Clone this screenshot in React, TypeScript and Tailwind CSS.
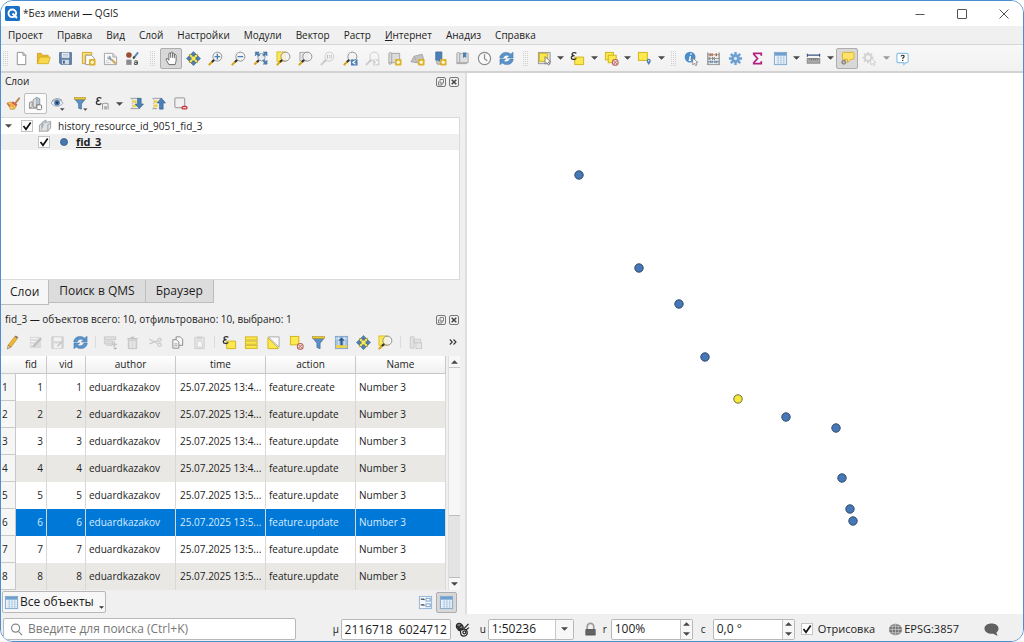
import React, { useState } from "react";

const YELLOW = "#fce94f";
const BLUE = "#4b7fb5";

// Magnifier shared by all zoom tools
const Lens = ({ faded = false, children }: { faded?: boolean; children?: React.ReactNode }) => (
  <g opacity={faded ? 0.4 : 1}>
    <path d="M5.2 10.8 1.5 14.5" stroke={faded ? "#999" : "#d9a514"} strokeWidth="2.2" strokeLinecap="round" />
    <path d="M7 9 4.2 11.8" stroke={faded ? "#888" : "#333"} strokeWidth="2.2" />
    <circle cx="10" cy="6" r="4.8" fill="#f3f3f1" fillOpacity="0.85" stroke="#8d8d8d" strokeWidth="1" />
    {children}
  </g>
);

const Epsilon = () => (
  <path
    d="M6.8 2.6C5.6 1.2 2.2 1.4 2.2 3.3c0 1.2 1.2 1.7 2.6 1.7C3 5 1.4 5.7 1.4 7.2c0 2.2 3.8 2.4 5.4.7"
    fill="none"
    stroke="#333"
    strokeWidth="1.4"
  />
);

const NoSign = () => (
  <g>
    <circle cx="12" cy="12.2" r="3.1" fill="#f6dfdc" stroke="#b5655c" strokeWidth="1.1" />
    <path d="m10 10.2 4 4M10 14.2l4-4" stroke="#b5655c" strokeWidth="1" />
  </g>
);

const Badge = () => (
  <g>
    <rect x="8.5" y="8.5" width="7" height="7" rx="1.2" fill="#dcb22c" />
    <circle cx="12" cy="12" r="1.8" fill="#fff6cc" />
  </g>
);

const MoveArrows = () => (
  <g>
    <rect x="3.5" y="3.5" width="9" height="9" fill={YELLOW} stroke="#d2b21c" strokeWidth="0.7" />
    <path d="m8 .4 3.2 3.400H9.200v1.700H6.800V3.800H4.800zM8 15.600l3.200-3.400H9.200v-1.700H6.800v1.700H4.800zM.4 8l3.400-3.200v2h1.700v2.400H3.800v2zM15.600 8l-3.400-3.200v2h-1.700v2.400h1.700v2z" fill={BLUE} stroke="#345f8e" strokeWidth="0.5" />
  </g>
);

const TableGrid = () => (
  <g>
    <rect x="1.5" y="1.5" width="13" height="13" fill="#eef5fb" stroke="#7ea6cc" />
    <rect x="2" y="2" width="12" height="3" fill="#6f9fcf" />
    <path d="M5.5 5v9M8.5 5v9M11.5 5v9" stroke="#a4c1dd" />
    <path d="M3 7.5h11M3 10h11M3 12.5h11" stroke="#bcd2e6" strokeWidth="0.7" />
  </g>
);

const icons = {
  file: <path d="M3.5 1.5h6l3 3v10h-9zM9.5 1.5v3h3" fill="#fff" stroke="#8d8d8d" />,
  folder: (
    <g>
      <path d="M1.5 13.5v-11h4l1.5 2h6v3" fill="#e9b92f" stroke="#c99a1c" strokeWidth="0.8" />
      <path d="m1.5 13.5 2.3-7h11.4l-2 7z" fill="#f9d84c" stroke="#d0a520" strokeWidth="0.8" />
    </g>
  ),
  save: (
    <g>
      <path d="M1.7 1.7h12.6v12.6H3.2l-1.5-1.5z" fill="#6584a8" stroke="#587699" />
      <rect x="4" y="1.8" width="8" height="5.4" fill="#f3f6fa" />
      <path d="M5 3.5h6M5 5.3h6" stroke="#98a9bb" strokeWidth="0.8" />
      <rect x="4.3" y="9.4" width="7.4" height="4.8" fill="#cfdbe8" />
      <rect x="5.3" y="10.3" width="2" height="3.2" fill="#48678a" />
    </g>
  ),
  newLayout: (
    <g>
      <path d="M1.5 1.5h10v3h-7v9h-3z" fill="#fce074" stroke="#cda52d" />
      <path d="M5 4.5h6l3 3v7H5z" fill="#fff" stroke="#999" />
      <Badge />
    </g>
  ),
  layouts: (
    <g>
      <path d="M1.500 2.500h9l4 4v8h-13z" fill="#fafafa" stroke="#a2a2a2" />
      <path d="M10.500 2.500v4h4" fill="#ddd" stroke="#aaa" />
      <path d="M5.300 5.300c1.500-1 3.700.4 3.200 2.200l1.500 1.500-1.500 1.500L7 9c-1.800.5-3-1.500-2.500-2.800l1.500 1 .8-.9z" fill="#8aa2bb" />
      <path d="m9 9 4.500 4.500" stroke="#d3a95d" strokeWidth="2.400" />
      <path d="M3 10.500h3M3 12.500h5" stroke="#ccc" />
    </g>
  ),
  styles: (
    <g>
      <circle cx="4.2" cy="4.2" r="3" fill="#9b5030" />
      <path d="m9.5 7 4.5-5.5" stroke="#5a88bd" strokeWidth="2" />
      <path d="m8.6 8 1.8-2" stroke="#444" strokeWidth="2" />
      <rect x="1.4" y="9.2" width="5.6" height="5.6" fill="#8a8a8a" />
      <path d="M10 11c1-1 3.3-.8 3.3.8v2.6m0-2.1c-1.5-.2-3.4 0-3.3 1.2 0 1.3 2.4 1.2 3.3-.3" fill="none" stroke="#555" strokeWidth="1.1" />
    </g>
  ),
  hand: (
    <path
      d="M5.2 14.5 2.5 9.7C1.6 8 3.3 7.3 4.2 8.6l1 1.3V3.2c0-1.5 1.9-1.5 1.9 0V2.3c0-1.5 2-1.5 2 0v1c0-1.4 1.9-1.3 1.9 0v1.2c.2-1.2 1.9-1 1.9.3v5.4c0 1.6-.8 2.4-1.1 4.3zM7.1 3v4.3M9.1 3v4.3M11 4v3.6"
      fill="#fff"
      stroke="#555"
      strokeWidth="0.9"
    />
  ),
  move: <MoveArrows />,
  zoomIn: (
    <Lens>
      <path d="M10 3v6M7 6h6" stroke="#4b7fb5" strokeWidth="1.5" />
    </Lens>
  ),
  zoomOut: (
    <Lens>
      <path d="M7 6h6" stroke="#4b7fb5" strokeWidth="1.5" />
    </Lens>
  ),
  zoomFull: (
    <g>
      <path d="M5 11 1.500 14.500" stroke="#d9a514" strokeWidth="2.200" />
      <path d="M6.500 9.500 4.200 11.800" stroke="#333" strokeWidth="2.200" />
      <circle cx="9" cy="6.500" r="4" fill="#e7edf3" stroke="#8d99a5" />
      <path d="M2.500 1h4.200L5.500 2.200l2 2L6 5.700l-2-2-1.500 1.500zM15 1v4.200l-1.200-1.500-2 2-1.500-1.500 2-2L10.800 1zM15 14h-4.200l1.500-1.300-2-2 1.500-1.500 2 2L15 9.800z" fill={BLUE} stroke="#3a6595" strokeWidth="0.500" />
    </g>
  ),
  zoomSelection: (
    <g>
      <rect x="1" y="1" width="9" height="10" fill={YELLOW} stroke="#d2b21c" strokeWidth="0.8" />
      <Lens />
    </g>
  ),
  zoomLayer: (
    <g>
      <rect x="2" y="1.5" width="8" height="9" fill="#e4e4e4" stroke="#aaa" />
      <Lens />
    </g>
  ),
  zoomNative: (
    <Lens faded>
      <path d="M8 4v4M12 4v4M10 4.6v.9M10 6.700v.9" stroke="#666" strokeWidth="1.1" />
    </Lens>
  ),
  zoomLast: (
    <g>
      <Lens />
      <rect x="8.500" y="9" width="7" height="6.500" fill={BLUE} />
      <path d="m13.300 10.200-2.800 2 2.800 2" fill="none" stroke="#fff" strokeWidth="1.200" />
    </g>
  ),
  zoomNext: (
    <g>
      <Lens faded />
      <rect x="8.500" y="9" width="7" height="6.500" fill="#d5d5d5" />
      <path d="m10.800 10.200 2.800 2-2.800 2" fill="none" stroke="#fff" strokeWidth="1.200" />
    </g>
  ),
  newMap: (
    <g>
      <path d="M2 2.500C3 1 5 1.500 5 3v9.500H2zM5 2.500h8.500v10H5M2 12.500v1c1 1.500 3 .5 3-1" fill="#dcdcdc" stroke="#9c9c9c" strokeWidth="0.9" />
      <Badge />
    </g>
  ),
  new3d: (
    <g>
      <path d="M1 11.500 4.500 5.500 13 3.500l2 7-5 2.500z" fill="#c3c3c3" stroke="#999" strokeWidth="0.8" />
      <path d="M4.500 5.500 7 12" stroke="#aaa" strokeWidth="0.8" />
      <Badge />
    </g>
  ),
  newBookmark: (
    <g>
      <path d="M4 1h6.500v12.500L7 11.500 4 9.500z" fill={BLUE} stroke="#3d699a" strokeWidth="0.8" />
      <path d="M4 9.500 5.500 14H10v-2" fill="#ccc" stroke="#888" strokeWidth="0.7" />
      <Badge />
    </g>
  ),
  bookmarks: (
    <g>
      <path d="M2 2.500C3 1 5 1.500 5 3v9.500H2zM5 2.500h9v10H5M2 12.500v1h10v-1" fill="#dfdfdf" stroke="#9c9c9c" strokeWidth="0.9" />
      <path d="M8.500 1.500h3.500v6l-1.700-1.300-1.800 1.300z" fill={BLUE} />
    </g>
  ),
  clock: (
    <g fill="none" stroke="#8b8b8b" strokeWidth="1.3">
      <circle cx="8" cy="8" r="6.500" fill="#fafafa" />
      <path d="M8 3.500V8.300l3 2" />
    </g>
  ),
  refresh: (
    <g fill="#5a93cc" stroke="#3f74aa" strokeWidth="0.5">
      <path d="M.8 7.400C1 1.800 8 -.3 12.500 3.200L15 1.300v6.200H8.800l2.300-2.100C8.500 3.400 5.200 4.600 4.400 7.400z" />
      <path d="M15.200 8.600c-.2 5.600-7.200 7.700-11.700 4.200L1 14.700V8.500h6.200l-2.300 2.100c2.600 2 5.900.8 6.700-2z" />
    </g>
  ),
  select: (
    <g>
      <rect x="1.500" y="1.500" width="12.500" height="12" fill="#e0e0dc" stroke="#999" />
      <rect x="2.500" y="2.500" width="8.500" height="8.500" fill={YELLOW} stroke="#d2b21c" />
      <path d="m8.500 6 .2 8 2-1.600 1.300 2.600 1.500-.8-1.300-2.400 2.500-.4z" fill="#fff" stroke="#666" strokeWidth="0.8" />
    </g>
  ),
  selectExpr: (
    <g>
      <path d="M5 6.500h9.500v8H5z" fill={YELLOW} stroke="#d2b21c" />
      <Epsilon />
    </g>
  ),
  deselect: (
    <g>
      <rect x="1.500" y="1.500" width="8.500" height="8" fill={YELLOW} stroke="#d2b21c" />
      <rect x="4.500" y="4.500" width="8.500" height="8" fill={YELLOW} stroke="#d2b21c" />
      <NoSign />
    </g>
  ),
  deselectOne: (
    <g>
      <rect x="1.500" y="1.500" width="9" height="9" fill={YELLOW} stroke="#d2b21c" />
      <NoSign />
    </g>
  ),
  selectLocation: (
    <g>
      <rect x="1.500" y="1.500" width="9.500" height="8.500" fill={YELLOW} stroke="#d2b21c" />
      <path d="M12.500 15C11 12.500 10.300 11.700 10.300 10.500a2.200 2.200 0 0 1 4.400 0c0 1.200-.7 2-2.200 4.500z" fill={BLUE} />
      <circle cx="12.500" cy="10.400" r=".8" fill="#fff" />
    </g>
  ),
  identify: (
    <g>
      <circle cx="6.500" cy="6.500" r="5.800" fill="#4e8cc8" />
      <path d="M7.500 2.600 7.200 4M6.800 5.400 5.800 10h1.800" stroke="#fff" strokeWidth="1.500" fill="none" />
      <path d="m9.200 7.500.2 7.200 1.800-1.500 1.200 2.500 1.400-.8-1.200-2.300 2.300-.4z" fill="#fff" stroke="#777" strokeWidth="0.8" />
    </g>
  ),
  calculator: (
    <g>
      <path d="M2 1.500v13M14 1.500v13" stroke="#888" strokeWidth="1.300" />
      <path d="M2 4h12M2 8h12M2 11.500h12M1 14.500h14" stroke="#888" strokeWidth="0.9" />
      <path d="M4.500 2.500v3M6.500 2.500v3M11 2.500v3" stroke="#b3653b" strokeWidth="1.400" />
      <path d="M4 6.500v3M7 6.500v3M9 6.500v3" stroke="#888" strokeWidth="1.200" />
      <path d="M4.500 10v3M6.500 10v3M9.500 10v3M11.500 10v3" stroke="#5686b6" strokeWidth="1.200" />
    </g>
  ),
  gear: (
    <g>
      <path d="M8 1v14M1 8h14M3 3l10 10M13 3 3 13" stroke="#6da0d3" strokeWidth="2.600" />
      <circle cx="8" cy="8" r="4.600" fill="#6da0d3" />
      <circle cx="8" cy="8" r="2.200" fill="#d9e8f6" stroke="#5586b8" strokeWidth="0.6" />
    </g>
  ),
  sigma: <path d="M12 5V2.500H4V3.500L8 8l-4 4.500v1h8V11" fill="none" stroke="#b0247f" strokeWidth="1.900" />,
  table: <TableGrid />,
  measure: (
    <g>
      <path d="M1.500 4.500h13M1.500 3v3M14.500 3v3" stroke="#3c5480" strokeWidth="1.300" />
      <rect x="1.300" y="8" width="13.400" height="5" fill="#aaa" stroke="#888" />
      <path d="M4 8v2M6 8v2M8 8v2M10 8v2M12 8v2" stroke="#666" strokeWidth="0.8" />
    </g>
  ),
  mapTips: (
    <g>
      <path d="M4 1.500h9.500q1.500 0 1.500 1.500V7.500q0 1.500-1.500 1.500H11L8 12.500V9H4Q2.500 9 2.500 7.500V3Q2.500 1.500 4 1.500z" fill="#fde36b" stroke="#e0ae1d" />
      <circle cx="4" cy="12" r="2.600" fill="#8b8b80" />
      <circle cx="4" cy="12" r="1" fill="#c8c8c0" />
    </g>
  ),
  action: (
    <g opacity="0.45">
      <path d="M6.500 1v12M.5 7h12M2.300 2.800l8.500 8.500M10.700 2.800l-8.500 8.500" stroke="#aaa" strokeWidth="2" />
      <circle cx="6.500" cy="7" r="4.600" fill="#aaa" />
      <circle cx="6.500" cy="7" r="2.600" fill="#f4f4f4" />
      <path d="m9.200 7.500.2 7.200 1.800-1.500 1.200 2.500 1.400-.8-1.200-2.300 2.300-.4z" fill="#fff" stroke="#888" strokeWidth="0.8" />
    </g>
  ),
  help: (
    <g>
      <path d="M3.500 2.500h9q1.500 0 1.500 1.500v7q0 1.500-1.500 1.500H11l-1.500 2-.5-2H3.500Q2 12.500 2 11V4q0-1.500 1.500-1.500z" fill="#fff" stroke="#8cc4e8" strokeWidth="1.300" />
      <path d="M6.500 5.700c.2-1.600 3.300-1.500 3.200.1 0 1-1.500 1.200-1.500 2.400M8.200 9.300v1.300" fill="none" stroke="#333" strokeWidth="1.300" />
    </g>
  ),
  brush: (
    <g>
      <path d="m10 7.500 4-5" stroke="#b98a5a" strokeWidth="2.200" strokeLinecap="round" />
      <path d="M1 7.500 5 6.500l6 4L9 14l-4 .3z" fill="#f4c95f" stroke="#b98a38" strokeWidth="0.7" />
      <path d="m6.500 6.500 5 3.500" stroke="#d6604c" strokeWidth="2.200" />
      <path d="m1.500 8 3 3" stroke="#c8604c" strokeWidth="1.300" />
      <path d="m4.500 8.500 4.300 3.500" stroke="#e89a3c" strokeWidth="1.200" />
    </g>
  ),
  addGroup: (
    <g>
      <path d="M1.500 13V7l3-1v5l-2 2zM5.500 12V4l3.500-2.500V12z" fill="#e0e0e0" stroke="#888" strokeWidth="0.9" />
      <path d="M9 1.500 12.500 3v6H9" fill="#b8c6d4" stroke="#7d8ea0" strokeWidth="0.9" />
      <path d="M1.500 13h8" stroke="#888" />
      <rect x="9.500" y="9.500" width="5" height="5" rx="1" fill="#fff" stroke="#777" />
    </g>
  ),
  eye: (
    <g>
      <path d="M1 7.500C4 3 11 2.500 14 7.500 11 12 4 12 1 7.500z" fill="#e8edf2" stroke="#98a4b0" strokeWidth="0.9" />
      <path d="M2 5.500C5 2 10 2 13 5" fill="none" stroke="#8a98a6" />
      <circle cx="7.500" cy="7.200" r="3" fill="#416f9f" />
      <circle cx="7.500" cy="7.200" r="1.200" fill="#1e3550" />
      <path d="M10.500 13h5L13 15.600z" fill="#444" />
    </g>
  ),
  filterMenu: (
    <g>
      <path d="M2 3.500h11L9 8.500v5.500l-3-1V8.500z" fill="#5b8fc5" stroke="#3d6b9c" strokeWidth="0.7" />
      <rect x="1.500" y="1.500" width="12" height="2.300" fill="#e8c93a" stroke="#a89029" strokeWidth="0.6" />
      <path d="M10.800 13.200h4.700l-2.300 2.400z" fill="#444" />
    </g>
  ),
  filter: (
    <g>
      <path d="M2 3.500h12L9.700 8.700v6l-3.400-1.500V8.700z" fill="#5b8fc5" stroke="#3d6b9c" strokeWidth="0.7" />
      <rect x="1.500" y="1.500" width="13" height="2.300" fill="#e8c93a" stroke="#a89029" strokeWidth="0.6" />
    </g>
  ),
  epsilonFilter: (
    <g>
      <Epsilon />
      <path d="M8 14.500V9.200q0-1.500 1.500-1.500h3q1.500 0 1.500 1.500v5.300M10.500 14.500v-3h1.500v3" fill="none" stroke="#999" strokeWidth="1.100" />
    </g>
  ),
  expand: (
    <g>
      <path d="M1.500 2.500h9M1.500 13.500h9" stroke="#999" />
      <path d="M3.500 3.500v10" stroke="#aaa" strokeDasharray="1 1" />
      <rect x="4" y="4.500" width="4" height="3" fill="#f0d34a" />
      <rect x="4" y="9" width="4" height="3" fill="#f0d34a" />
      <path d="M9 2.500h4v6h2.500L11 13.500l-4.500-5H9z" fill={BLUE} stroke="#315f90" strokeWidth="0.6" />
    </g>
  ),
  collapse: (
    <g>
      <path d="M1.500 2.500h9M1.500 13.500h5" stroke="#999" />
      <path d="M3 3.500v10" stroke="#aaa" strokeDasharray="1 1" />
      <rect x="3" y="4.500" width="4" height="3" fill="#f0d34a" />
      <rect x="3" y="9" width="4" height="3" fill="#f0d34a" />
      <path d="M9 14h4V7.500h2.500L11 2 6.500 7.500H9z" fill={BLUE} stroke="#315f90" strokeWidth="0.6" />
    </g>
  ),
  removeLayer: (
    <g>
      <rect x="2" y="2" width="10.500" height="10.500" rx="1" fill="#f1f1f1" stroke="#8f8f8f" />
      <rect x="9" y="10.500" width="6.500" height="4" rx="1.800" fill="#c8393f" />
      <path d="M10.500 12.500h3.500" stroke="#fff" />
    </g>
  ),
  group: (
    <g>
      <path d="M1.500 13.500V6.500l3-2V12z" fill="#ddd" stroke="#999" strokeWidth="0.9" />
      <path d="M4.500 12.500v-9l4-2.500v10z" fill="#c3d0dc" stroke="#8b9bab" strokeWidth="0.9" />
      <path d="m8.500 3.500 5-1v7l-3 3.500H3" fill="#e2e2e2" stroke="#999" strokeWidth="0.9" />
      <path d="M10.500 13V6l3-1.500" fill="none" stroke="#999" strokeWidth="0.9" />
    </g>
  ),
  pencil: (
    <g>
      <path d="m3.300 10.800 7-9 2.800 2-6.700 9.200z" fill="#f0b832" stroke="#b8862a" strokeWidth="0.7" />
      <path d="m10.300 1.800 1.200-1.300 2.700 2-1.100 1.300z" fill="#7d7468" />
      <path d="m3.300 10.800-.8 4.200 3.900-2z" fill="#e6cda3" stroke="#8a6a3a" strokeWidth="0.6" />
    </g>
  ),
  editMulti: (
    <g opacity="0.7">
      <rect x="2" y="2" width="12" height="12" fill="#d3d3d3" />
      <path d="M3 4h7M3 7h5M3 10h3" stroke="#fff" />
      <path d="m5.500 12.500 8.500-9" stroke="#a5a5a5" strokeWidth="2" />
    </g>
  ),
  saveEdits: (
    <g opacity="0.75">
      <path d="M2 2h12v12H2z" fill="#d2d2d2" stroke="#bbb" />
      <rect x="4" y="2.500" width="8" height="4" fill="#f4f4f4" />
      <rect x="4" y="9" width="8" height="5" fill="#f0f0f0" />
      <path d="m8 12 5-5" stroke="#b5b5b5" strokeWidth="1.500" />
    </g>
  ),
  addFeature: (
    <g opacity="0.7">
      <path d="M1.500 2h12v3h-12zM1.500 6.500h9v3h-9zM3.500 11h6" fill="#ddd" stroke="#b5b5b5" />
      <path d="M12 7v6M9 10h6" stroke="#b5b5b5" strokeWidth="1.600" />
      <path d="M11 13.500h4l-2 2z" fill="#888" />
    </g>
  ),
  trash: (
    <g opacity="0.75">
      <path d="M3.500 5.500h9v9h-9z" fill="#d2d2d2" stroke="#b5b5b5" />
      <path d="M2.500 4h11M6 2.500h4" stroke="#b5b5b5" strokeWidth="1.500" />
      <path d="M6.300 6v8M9.700 6v8" stroke="#f1f1f1" />
    </g>
  ),
  cut: (
    <g fill="none" stroke="#c9c9c9" strokeWidth="1.300">
      <path d="m1.500 4.500 9 4.500M1.500 9.500l9-3.500" />
      <circle cx="12.300" cy="5" r="1.700" />
      <circle cx="12.300" cy="10.300" r="1.700" />
    </g>
  ),
  copy: (
    <g fill="#f7f7f7" stroke="#888">
      <path d="M6.500 2h4.500l2.500 2.500V11h-7z" />
      <path d="M3 5h4l2.500 2.500V14H3z" />
      <path d="M4.500 9.500H8M4.500 11.500H8" strokeWidth="0.8" />
    </g>
  ),
  paste: (
    <g opacity="0.8">
      <rect x="3" y="2.500" width="10" height="12" fill="#e2e2e2" stroke="#c8c8c8" />
      <rect x="5.500" y="1.500" width="5" height="2.500" fill="#cacaca" />
      <path d="M5.500 6.500H9l2 2V13H5.500z" fill="#f9f9f9" stroke="#ccc" />
    </g>
  ),
  selectAll: (
    <g fill={YELLOW} stroke="#d2b21c">
      <rect x="1.500" y="2" width="12.500" height="3.300" />
      <rect x="1.500" y="6.500" width="12.500" height="3.300" />
      <rect x="1.500" y="11" width="12.500" height="3.300" />
    </g>
  ),
  invert: (
    <g>
      <path d="M2.500 2H14v11z" fill="#fafafa" stroke="#aaa" />
      <path d="M2 3v11.500h11.500z" fill={YELLOW} stroke="#d2b21c" />
    </g>
  ),
  moveTop: (
    <g>
      <rect x="1.500" y="1.500" width="13" height="13" fill="#a6c3df" stroke="#7fa5cb" />
      <path d="M1.500 4h13M5 2v10M11 2v10" stroke="#d7e4f0" />
      <rect x="2" y="10.800" width="12" height="3" fill="#f0d34a" />
      <path d="M8 2.500 11.500 6H9.200v5H6.800V6H4.500z" fill="#315f90" />
    </g>
  ),
  dock: (
    <g opacity="0.7">
      <path d="M2.500 2h4v12h-4zM6.500 4.500h7v4h-7z" fill="#ddd" stroke="#bbb" />
      <rect x="8.500" y="8.500" width="6" height="6" fill="#e3e3e3" stroke="#bbb" />
    </g>
  ),
  form: (
    <g>
      <rect x="1.500" y="1.500" width="13" height="13" fill="#f4f8fc" stroke="#8fb3d6" />
      <rect x="8.500" y="3.500" width="4.500" height="3" fill="#fff" stroke="#6d9ccb" />
      <rect x="8.500" y="9.500" width="4.500" height="3" fill="#fff" stroke="#6d9ccb" />
      <path d="M3 4.500h2.500L7 5M3 10.500h2.500L7 11" stroke="#444" strokeWidth="1.300" fill="none" />
    </g>
  ),
  mouse: (
    <g fill="none" stroke="#222" strokeWidth="1.300">
      <ellipse cx="5" cy="5" rx="3.800" ry="3.200" fill="#777" transform="rotate(45 5 5)" />
      <path d="M7 3 3 7M1.500 4 8 8.500M3 8.500c2 0 3 1 3 3s1 3.500 3.500 3.500 4-2 3.500-4.500-3-3.500-5-2.500" />
      <circle cx="10" cy="11" r="1.600" />
      <path d="M9.500 7 14.500 2M11.500 8.500 15 6" />
    </g>
  ),
  lock: (
    <g>
      <path d="M4.500 8V5a3.500 3.500 0 0 1 7 0v3" fill="none" stroke="#9b9b9b" strokeWidth="1.800" />
      <rect x="2.500" y="7.500" width="11" height="7" rx="1" fill="#5c5c5c" />
      <path d="M3 9.500h10M3 11.500h10" stroke="#777" strokeWidth="0.6" />
    </g>
  ),
  globe: (
    <g>
      <ellipse cx="8" cy="8" rx="7" ry="6.200" fill="#777" />
      <g fill="none" stroke="#cfcfcf" strokeWidth="0.7">
        <path d="M1 8h14M2.500 4.600h11M2.500 11.400h11M8 1.800v12.400" />
        <ellipse cx="8" cy="8" rx="3.500" ry="6.200" />
      </g>
    </g>
  ),
  chat: <path d="M8 1.500c4.600 0 7.500 2.300 7.500 5.500 0 2-1 3.500-2.300 4.300L14.500 15l-4.700-2.400C4.200 13 .5 10.600.5 7 .5 3.800 3.400 1.500 8 1.500z" fill="#606060" />,
  search: (
    <g fill="none" stroke="#8a8a8a" strokeWidth="1.300">
      <circle cx="7" cy="6.500" r="4.300" />
      <path d="m10 10 4 4" />
    </g>
  ),
};

type IconName = keyof typeof icons;

const Icon = ({ name }: { name: IconName }) => (
  <svg viewBox="0 0 16 16" fill="none" className="size-[15px] shrink-0" aria-hidden="true">
    {icons[name]}
  </svg>
);

const Triangle = ({ up = false, faded = false }: { up?: boolean; faded?: boolean }) => (
  <svg viewBox="0 0 8 4" className="h-1 w-[7px] shrink-0" aria-hidden="true">
    <path d={up ? "M0 4h8L4 0z" : "M0 0h8L4 4z"} fill={faded ? "#999" : "#484848"} />
  </svg>
);

interface Tool {
  icon: IconName;
  label: string;
  menu?: boolean;
  active?: "gray" | "white";
  disabled?: boolean;
}

const ToolGroup = ({ tools, className }: { tools: Tool[]; className: string }) => (
  <div className={`flex shrink-0 ${className}`}>
    {tools.map((tool) => (
      <div key={tool.label} className={`flex min-w-0 items-center ${tool.menu ? "flex-[3]" : "flex-[2]"}`}>
        <button
          type="button"
          aria-label={tool.label}
          disabled={tool.disabled}
          className={`flex h-[21px] min-w-0 flex-[2] items-center justify-center rounded-xs ${
            tool.active === "gray"
              ? "border border-[#adadad] bg-[#d8d8d8]"
              : tool.active === "white"
              ? "border border-[#bdbdbd] bg-[#fbfbfb]"
              : ""
          }`}
        >
          <Icon name={tool.icon} />
        </button>
        {tool.menu && (
          <button type="button" aria-label={`${tool.label}: меню`} className="flex min-w-0 flex-1 items-center justify-center">
            <Triangle faded={tool.disabled} />
          </button>
        )}
      </div>
    ))}
  </div>
);

const Grip = ({ className }: { className: string }) => (
  <div className={`flex shrink-0 justify-center ${className}`}>
    <svg viewBox="0 0 5 15" className="h-[15px] w-[5px]" aria-hidden="true">
      <path d="M.5 0v15M2.500 0v15M4.500 0v15" stroke="#cfcfcf" strokeDasharray="1 1" />
    </svg>
  </div>
);

const Separator = () => <div className="mx-[3px] h-3 w-px shrink-0 bg-[#dcdcdc]" />;

const fileTools: Tool[] = [
  { icon: "file", label: "Новый проект" },
  { icon: "folder", label: "Открыть проект" },
  { icon: "save", label: "Сохранить проект" },
  { icon: "newLayout", label: "Новый макет" },
  { icon: "layouts", label: "Менеджер макетов" },
  { icon: "styles", label: "Управление стилями" },
];

const navigationTools: Tool[] = [
  { icon: "hand", label: "Прокрутка карты", active: "gray" },
  { icon: "move", label: "Центрировать выделенное" },
  { icon: "zoomIn", label: "Увеличить" },
  { icon: "zoomOut", label: "Уменьшить" },
  { icon: "zoomFull", label: "Полный охват" },
  { icon: "zoomSelection", label: "Увеличить до выделенного" },
  { icon: "zoomLayer", label: "Увеличить до слоя" },
  { icon: "zoomNative", label: "Исходное разрешение", disabled: true },
  { icon: "zoomLast", label: "Предыдущий охват" },
  { icon: "zoomNext", label: "Следующий охват", disabled: true },
  { icon: "newMap", label: "Новая карта" },
  { icon: "new3d", label: "Новая 3D карта" },
  { icon: "newBookmark", label: "Новая закладка" },
  { icon: "bookmarks", label: "Закладки" },
  { icon: "clock", label: "Управление временем" },
  { icon: "refresh", label: "Обновить" },
];

const selectionTools: Tool[] = [
  { icon: "select", label: "Выделить объекты", menu: true },
  { icon: "selectExpr", label: "Выделить по выражению", menu: true },
  { icon: "deselect", label: "Снять выделение", menu: true },
  { icon: "selectLocation", label: "Выделить по положению", menu: true },
];

const attributeTools: Tool[] = [
  { icon: "identify", label: "Определить объекты" },
  { icon: "calculator", label: "Калькулятор полей" },
  { icon: "gear", label: "Анализ данных" },
  { icon: "sigma", label: "Статистика" },
  { icon: "table", label: "Таблица атрибутов", menu: true },
  { icon: "measure", label: "Измерить", menu: true },
  { icon: "mapTips", label: "Подсказки карты", active: "gray" },
  { icon: "action", label: "Действие", menu: true, disabled: true },
  { icon: "help", label: "Справка" },
];

const layerTools: Tool[] = [
  { icon: "brush", label: "Стилизация слоя" },
  { icon: "addGroup", label: "Добавить группу", active: "white" },
  { icon: "eye", label: "Видимость слоёв" },
  { icon: "filterMenu", label: "Фильтр легенды" },
  { icon: "epsilonFilter", label: "Фильтр по выражению", menu: true },
  { icon: "expand", label: "Развернуть все" },
  { icon: "collapse", label: "Свернуть все" },
  { icon: "removeLayer", label: "Удалить слой" },
];

const editTools: Tool[] = [
  { icon: "pencil", label: "Режим правки" },
  { icon: "editMulti", label: "Массовая правка", disabled: true },
  { icon: "saveEdits", label: "Сохранить правки", disabled: true },
  { icon: "refresh", label: "Обновить таблицу" },
];

const clipboardTools: Tool[] = [
  { icon: "addFeature", label: "Добавить объект", disabled: true },
  { icon: "trash", label: "Удалить объекты", disabled: true },
  { icon: "cut", label: "Вырезать", disabled: true },
  { icon: "copy", label: "Копировать" },
  { icon: "paste", label: "Вставить", disabled: true },
];

const tableSelectionTools: Tool[] = [
  { icon: "selectExpr", label: "Выделить выражением" },
  { icon: "selectAll", label: "Выделить все" },
  { icon: "invert", label: "Обратить выделение" },
  { icon: "deselectOne", label: "Снять выделение" },
  { icon: "filter", label: "Фильтр" },
  { icon: "moveTop", label: "Поднять выделенное" },
  { icon: "move", label: "Центрировать карту" },
  { icon: "zoomSelection", label: "Увеличить до строк" },
];

const dockTools: Tool[] = [{ icon: "dock", label: "Новое поле", disabled: true }];

const menuItems = ["Проект", "Правка", "Вид", "Слой", "Настройки", "Модули", "Вектор", "Растр", "Интернет", "Анадиз", "Справка"];

const features = [
  { fid: 1, time: "25.07.2025 13:4...", action: "feature.create" },
  { fid: 2, time: "25.07.2025 13:4...", action: "feature.update" },
  { fid: 3, time: "25.07.2025 13:4...", action: "feature.update" },
  { fid: 4, time: "25.07.2025 13:4...", action: "feature.update" },
  { fid: 5, time: "25.07.2025 13:5...", action: "feature.update" },
  { fid: 6, time: "25.07.2025 13:5...", action: "feature.update" },
  { fid: 7, time: "25.07.2025 13:5...", action: "feature.update" },
  { fid: 8, time: "25.07.2025 13:5...", action: "feature.update" },
];

// Point positions on the map canvas
const points = [
  { x: 112, y: 102 },
  { x: 172, y: 195 },
  { x: 212, y: 231 },
  { x: 238, y: 284 },
  { x: 271, y: 326, selected: true },
  { x: 319, y: 344 },
  { x: 369, y: 355 },
  { x: 375, y: 405 },
  { x: 383, y: 436 },
  { x: 386, y: 448 },
];

const Checkbox = ({ id, label }: { id: string; label?: string }) => {
  const [checked, setChecked] = useState(true);
  return (
    <span className="relative flex size-3 shrink-0">
      <input
        id={id}
        type="checkbox"
        aria-label={label}
        checked={checked}
        onChange={(e) => setChecked(e.target.checked)}
        className="size-3 appearance-none border border-[#c4c4c4] bg-white"
      />
      {checked && (
        <svg viewBox="0 0 12 12" className="pointer-events-none absolute inset-0" aria-hidden="true">
          <path d="m2.500 6 2.500 3.200L9.700 2.500" fill="none" stroke="#111" strokeWidth="1.700" />
        </svg>
      )}
    </span>
  );
};

const DockHeader = ({ title }: { title: string }) => (
  <div className="flex h-[17px] items-center justify-between pr-[6px] pl-1">
    <h2 className="truncate text-[10px]">{title}</h2>
    <div className="flex gap-[3px]">
      <button type="button" aria-label="Открепить панель">
        <svg viewBox="0 0 10 10" className="size-[10px]" fill="none" stroke="#777">
          <rect x=".5" y=".5" width="9" height="9" rx="1.500" />
          <path d="M4 2.500h3.500V6H4zM2.500 4.500v3.500H6V6" strokeWidth="0.9" />
        </svg>
      </button>
      <button type="button" aria-label="Закрыть панель">
        <svg viewBox="0 0 10 10" className="size-[10px]" fill="none" stroke="#777">
          <rect x=".5" y=".5" width="9" height="9" rx="1.500" />
          <path d="m2.700 2.700 4.600 4.600M7.300 2.700 2.700 7.300" stroke="#444" strokeWidth="1.500" />
        </svg>
      </button>
    </div>
  </div>
);

const TitleBar = () => (
  <header className="flex h-[25px] items-center bg-white pl-1">
    <svg viewBox="0 0 15 15" className="size-[15px]" aria-hidden="true">
      <rect width="15" height="15" rx="1.500" fill="#1b6fc4" />
      <circle cx="7.300" cy="7.300" r="3.800" fill="none" stroke="#fff" strokeWidth="1.900" />
      <path d="m7.500 7.500 4.500 4.500" stroke="#fff" strokeWidth="2" />
    </svg>
    <h1 className="ml-[3px] flex-1 text-[10px]">*Без имени — QGIS</h1>
    <div className="flex gap-8 pr-[14px]">
      <button type="button" aria-label="Свернуть">
        <svg viewBox="0 0 10 10" className="size-[10px]" fill="none" stroke="#555">
          <path d="M.5 5.500h9" />
        </svg>
      </button>
      <button type="button" aria-label="Развернуть">
        <svg viewBox="0 0 10 10" className="size-[10px]" fill="none" stroke="#555">
          <rect x=".5" y=".5" width="9" height="9" rx="0.5" />
        </svg>
      </button>
      <button type="button" aria-label="Закрыть">
        <svg viewBox="0 0 10 10" className="size-[10px]" fill="none" stroke="#555">
          <path d="m.5.5 9 9M9.500.5l-9 9" />
        </svg>
      </button>
    </div>
  </header>
);

const LayersPanel = () => {
  const [tab, setTab] = useState("Слои");
  return (
    <section className="flex flex-col">
      <DockHeader title="Слои" />
      <div className="flex h-[27px] items-center pl-px">
        <ToolGroup tools={layerTools} className="w-[190px]" />
      </div>
      <div className="mr-[5px] h-[163px] border border-l-0 border-[#dadada] bg-white">
        <div className="flex h-4 items-center pl-1">
          <button type="button" aria-label="Свернуть группу" className="flex w-4 shrink-0">
            <Triangle />
          </button>
          <Checkbox id="layer-group" label="history_resource_id_9051_fid_3" />
          <span className="mx-[5px] flex">
            <Icon name="group" />
          </span>
          <span className="text-[10px]">history_resource_id_9051_fid_3</span>
        </div>
        <div className="flex h-4 items-center bg-[#f0f0f0] pl-[37px]">
          <Checkbox id="layer-fid" label="fid_3" />
          <svg viewBox="0 0 8 8" className="mr-2 ml-[10px] size-2" aria-hidden="true">
            <circle cx="4" cy="4" r="3.500" fill="#4678b2" stroke="#34577f" strokeWidth="0.8" />
          </svg>
          <span className="text-[11px] font-bold underline">fid_3</span>
        </div>
      </div>
      <div role="tablist" className="flex h-[25px] items-start">
        {["Слои", "Поиск в QMS", "Браузер"].map((name) => (
          <button
            key={name}
            type="button"
            role="tab"
            aria-selected={tab === name}
            onClick={() => setTab(name)}
            className={`border border-t-0 border-[#bdbdbd] text-[12px] ${
              tab === name ? "h-[25px] border-l-0 bg-[#f6f6f6] px-[9px]" : "h-[23px] border-l-0 bg-[#dcdcdc] px-[10px]"
            }`}
          >
            {name}
          </button>
        ))}
      </div>
    </section>
  );
};

const columns = ["fid", "vid", "author", "time", "action", "Name"];

const AttributeTable = () => {
  const [selected, setSelected] = useState(6);
  return (
    <section className="flex min-h-0 flex-1 flex-col pt-[6px]">
      <DockHeader title="fid_3 — объектов всего: 10, отфильтровано: 10, выбрано: 1" />
      <div className="flex h-[28px] items-center pr-1">
        <ToolGroup tools={editTools} className="w-[91px]" />
        <Separator />
        <ToolGroup tools={clipboardTools} className="w-[112px]" />
        <Separator />
        <ToolGroup tools={tableSelectionTools} className="w-[179px]" />
        <Separator />
        <ToolGroup tools={dockTools} className="w-[22px]" />
        <button type="button" aria-label="Ещё" className="mr-1 ml-auto">
          <svg viewBox="0 0 8 6" className="h-[6px] w-2" fill="none" stroke="#333" strokeWidth="1.100">
            <path d="m.8.5 2.500 2.500L.8 5.500M4.500.5 7 3 4.500 5.500" />
          </svg>
        </button>
      </div>
      <div className="flex pr-[5px]">
        <div className="min-w-0 flex-1">
          <table className="w-full table-fixed border-separate border-spacing-0 text-[10px]">
            <colgroup>
              <col className="w-[15px]" />
              <col className="w-[31px]" />
              <col className="w-[39px]" />
              <col className="w-[90px]" />
              <col className="w-[90px]" />
              <col className="w-[90px]" />
              <col />
            </colgroup>
            <thead>
              <tr className="h-[18px] bg-linear-to-b from-white to-[#efefef]">
                <th aria-label="Номер" className="border-b border-[#c8c8c8] p-0" />
                {columns.map((column) => (
                  <th key={column} className="border-r border-b border-[#c8c8c8] p-0 font-normal">
                    {column}
                  </th>
                ))}
              </tr>
            </thead>
            <tbody>
              {features.map((feature) => {
                const isSelected = feature.fid === selected;
                return (
                  <tr
                    key={feature.fid}
                    onClick={() => setSelected(feature.fid)}
                    className={`h-[27px] ${isSelected ? "bg-[#0078d7] text-[#d9ecff]" : "bg-white even:bg-[#e9e8e4]"}`}
                  >
                    <th scope="row" className="border-r border-b border-[#c8c8c8] bg-[#f6f6f6] p-0 pl-px text-left font-normal text-[#222]">
                      {feature.fid}
                    </th>
                    <td className="border-r border-[#d8d8d8] p-0 pr-[3px] text-right">{feature.fid}</td>
                    <td className="border-r border-[#d8d8d8] p-0 pr-[3px] text-right">{feature.fid}</td>
                    <td className="border-r border-[#d8d8d8] p-0 pl-[3px]">eduardkazakov</td>
                    <td className="border-r border-[#d8d8d8] p-0 pl-1 whitespace-nowrap">{feature.time}</td>
                    <td className="border-r border-[#d8d8d8] p-0 pl-[3px]">{feature.action}</td>
                    <td className="border-r border-[#d8d8d8] p-0 pl-[3px]">Number 3</td>
                  </tr>
                );
              })}
            </tbody>
          </table>
        </div>
        <div className="ml-[2px] flex w-[12px] flex-col border-l border-[#dedede] bg-[#f7f7f7]">
          <button type="button" aria-label="Вверх" className="flex h-3 items-center justify-center border-b border-[#c8c8c8]">
            <Triangle up />
          </button>
          <div className="flex-1" />
          <div className="h-[63px] border-y border-[#bdbdbd] bg-[#e4e4e4]" />
          <button type="button" aria-label="Вниз" className="flex h-3 items-center justify-center">
            <Triangle />
          </button>
        </div>
      </div>
      <div className="flex flex-1 items-center gap-1 pr-2 pl-px">
        <button type="button" className="mr-auto flex h-[22px] items-center gap-px rounded-xs border border-[#b8b8b8] bg-[#f7f7f7] px-px text-[12px]">
          <Icon name="table" />
          Все объекты
          <svg viewBox="0 0 8 4" className="mb-[3px] ml-[4px] h-[3px] w-[5px] self-end" aria-hidden="true">
            <path d="M0 0h8L4 4z" fill="#333" />
          </svg>
        </button>
        <button type="button" aria-label="Форма" className="flex size-[21px] items-center justify-center">
          <Icon name="form" />
        </button>
        <button type="button" aria-label="Таблица" className="-ml-1 flex size-[21px] items-center justify-center rounded-xs border border-[#adadad] bg-[#d8d8d8]">
          <Icon name="table" />
        </button>
      </div>
    </section>
  );
};

const SpinBox = ({ id, value, className }: { id: string; value: string; className: string }) => (
  <div className={`flex h-[21px] shrink-0 rounded-xs border border-[#b8b8b8] bg-white ${className}`}>
    <input id={id} defaultValue={value} className="min-w-0 flex-1 pl-[3px] outline-none" />
    <div className="flex w-3 flex-col border-l border-[#c4c4c4] bg-[#f7f7f7]">
      <button type="button" aria-label="Больше" className="flex flex-1 items-center justify-center">
        <Triangle up />
      </button>
      <button type="button" aria-label="Меньше" className="flex flex-1 items-center justify-center">
        <Triangle />
      </button>
    </div>
  </div>
);

const StatusBar = () => (
  <footer className="flex h-[27px] items-center bg-[#f0f0f0] pt-[3px] pl-[2px] text-[12px]">
    <label className="flex h-[22px] w-[293px] items-center gap-1 rounded-xs border border-[#b8b8b8] bg-white pl-[5px]">
      <Icon name="search" />
      <input type="search" aria-label="Поиск" placeholder="Введите для поиска (Ctrl+K)" className="min-w-0 flex-1 outline-none placeholder:text-[#777]" />
    </label>
    <div className="flex-1" />
    <label htmlFor="coords" className="w-2 text-[10px]">μ</label>
    <input id="coords" defaultValue="2116718  6024712" className="h-[21px] w-[110px] rounded-xs border border-[#b8b8b8] bg-white text-center outline-none" />
    <button type="button" aria-label="Отслеживание курсора" className="ml-1">
      <Icon name="mouse" />
    </button>
    <label htmlFor="scale" className="ml-[10px] w-2 text-[10px]">u</label>
    <div className="relative flex h-[21px] w-[86px] shrink-0">
      <select id="scale" className="w-full appearance-none rounded-xs border border-[#b8b8b8] bg-white pl-[3px] outline-none">
        <option>1:50236</option>
      </select>
      <span className="pointer-events-none absolute inset-y-px right-px flex w-[18px] items-center justify-center border-l border-[#c8c8c8] bg-[#f7f7f7]">
        <Triangle />
      </span>
    </div>
    <button type="button" aria-label="Зафиксировать масштаб" className="ml-[9px]">
      <Icon name="lock" />
    </button>
    <label htmlFor="magnifier" className="ml-[5px] w-2 text-[10px]">r</label>
    <SpinBox id="magnifier" value="100%" className="w-[82px]" />
    <label htmlFor="rotation" className="ml-2 w-3 text-[10px]">c</label>
    <SpinBox id="rotation" value="0,0 °" className="w-[82px]" />
    <div className="ml-[6px] flex items-center gap-[5px]">
      <Checkbox id="render" />
      <label htmlFor="render" className="text-[11px]">Отрисовка</label>
    </div>
    <button type="button" className="ml-[13px] flex items-center gap-px text-[11px]">
      <Icon name="globe" />
      EPSG:3857
    </button>
    <button type="button" aria-label="Сообщения" className="mr-6 ml-[25px]">
      <Icon name="chat" />
    </button>
  </footer>
);

function App() {
  return (
    <div className="flex min-h-screen flex-col overflow-hidden rounded-[13px] border border-[#4a8fd2] bg-[#f0f0f0] font-['Open_Sans','Noto_Sans',sans-serif] text-[#1c1c1c]">
      <TitleBar />
      <nav className="flex h-[19px] items-center gap-[14px] border-b border-[#d6d6d6] pl-[7px] text-[10px]">
        {menuItems.map((item) => (
          <button key={item} type="button">
            {item === "Интернет" ? (
              <>
                <u>И</u>нтернет
              </>
            ) : item === "Анадиз" ? (
              <>
                Ана<u>д</u>из
              </>
            ) : (
              item
            )}
          </button>
        ))}
      </nav>
      <div className="flex h-7 items-center border-b-2 border-[#d2d2d2] bg-linear-to-b from-[#f8f8f8] to-[#f1f1f1]">
        <Grip className="w-[9px]" />
        <ToolGroup tools={fileTools} className="w-[134px]" />
        <Grip className="w-4" />
        <ToolGroup tools={navigationTools} className="w-[358px]" />
        <Grip className="w-[15px]" />
        <ToolGroup tools={selectionTools} className="w-[134px]" />
        <Grip className="w-[13px]" />
        <ToolGroup tools={attributeTools} className="w-[234px]" />
      </div>
      <div className="flex flex-1">
        <aside className="flex w-[464px] shrink-0 flex-col">
          <LayersPanel />
          <AttributeTable />
        </aside>
        <main className="min-w-0 flex-1 border-l-2 border-[#dedede] bg-white">
          <svg className="size-full" role="img" aria-label="Карта">
            {points.map((point, index) => (
              <circle
                key={index}
                cx={point.x}
                cy={point.y}
                r="4.200"
                fill={point.selected ? "#f5ea3c" : "#4678b8"}
                stroke={point.selected ? "#6b6a3c" : "#2f4a6b"}
              />
            ))}
          </svg>
        </main>
      </div>
      <StatusBar />
    </div>
  );
}

export default App;
